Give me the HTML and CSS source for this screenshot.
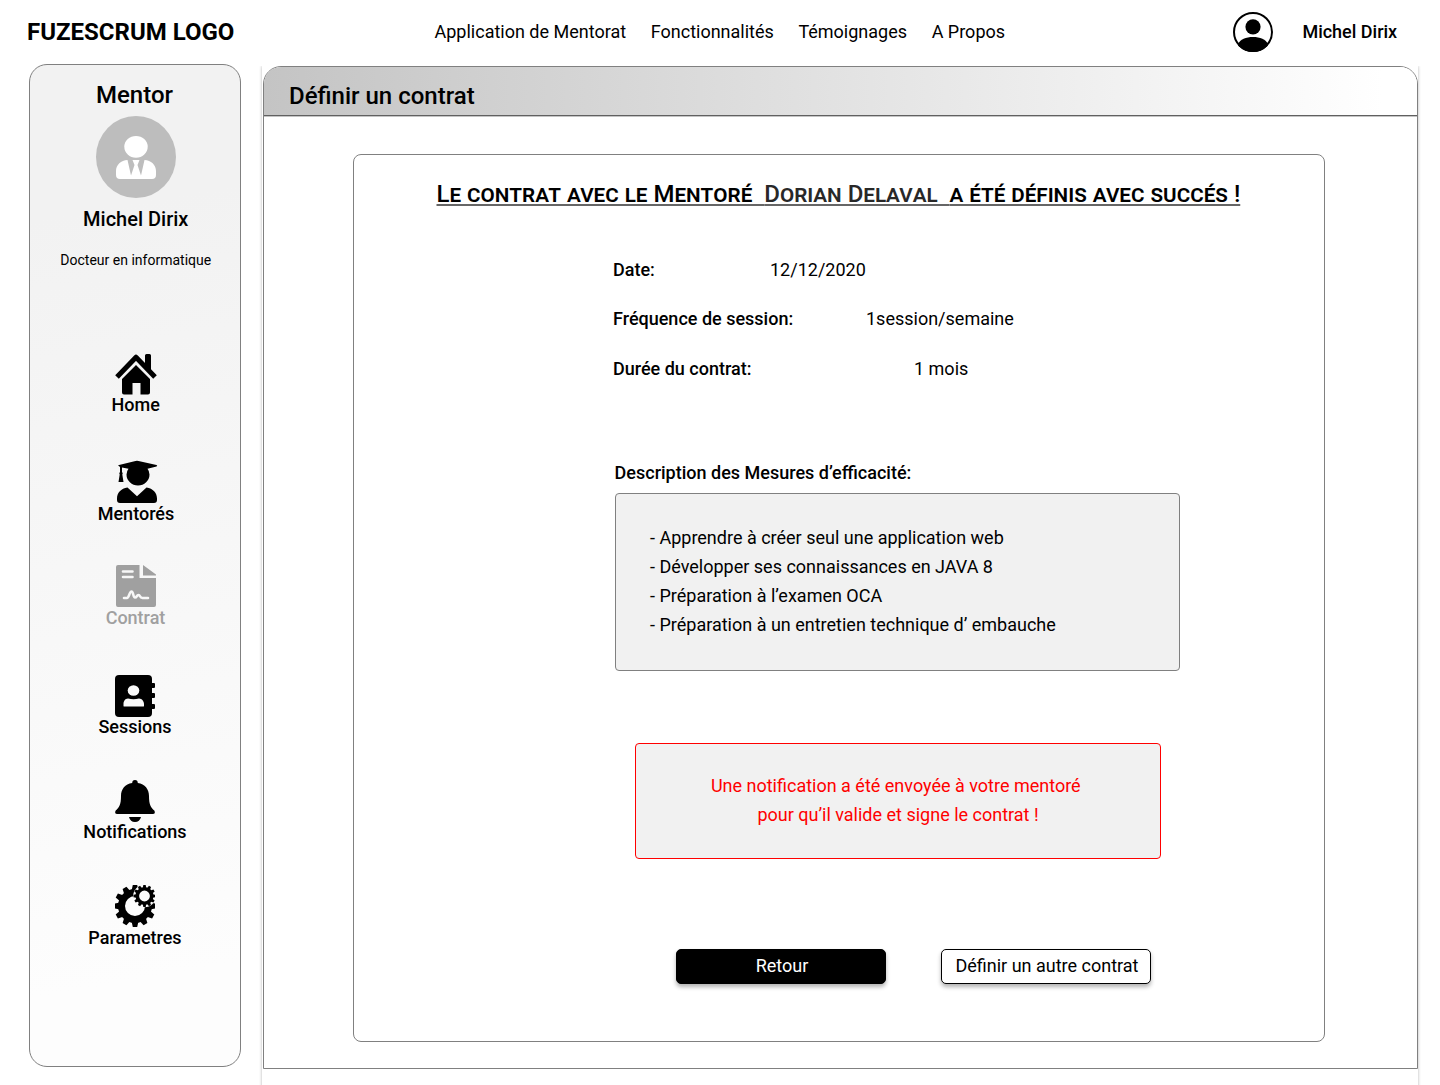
FILE: index.html
```html
<!DOCTYPE html>
<html lang="fr">
<head>
<meta charset="utf-8">
<title>Définir un contrat</title>
<link rel="stylesheet" href="styles.css">
</head>
<body>
<header class="topbar">
  <div class="logo">FUZESCRUM LOGO</div>
  <nav class="topnav">
    <a>Application de Mentorat</a><a>Fonctionnalités</a><a>Témoignages</a><a>A Propos</a>
  </nav>
  <svg class="user-icon" viewBox="0 0 40 40"><defs><clipPath id="disc"><circle cx="20" cy="20" r="20"/></clipPath></defs><circle cx="20" cy="20" r="19" fill="#fff" stroke="#000" stroke-width="2"/><circle cx="20" cy="14.8" r="7.6"/><path clip-path="url(#disc)" d="M5 32C7 27.500 13 25 20 25s13 2.500 15 7v9H5z"/></svg>
  <span class="user-name">Michel Dirix</span>
</header>
<div class="layout">
  <aside class="sidebar">
    <h2 class="role">Mentor</h2>
    <svg class="avatar" viewBox="0 0 80 82"><ellipse cx="40" cy="41" rx="40" ry="41" fill="#bdbdbd"/><ellipse cx="40" cy="30.800" rx="11.700" ry="10.900" fill="#fff"/><path fill="#fff" d="M31.500 44C25 44 20 49 20 55v4q0 4 4 4h32q4 0 4-4v-4c0-6-5-11-11.500-11L45 59.500 41.500 49l2-5h-7l2 5L35 59.500z"/></svg>
    <div class="mentor-name">Michel Dirix</div>
    <div class="mentor-title">Docteur en informatique</div>
    <nav class="menu">
      <a class="item home">
        <svg width="42" height="42" viewBox="0 0 42 42"><path d="M2 24 21 4.200 40 24" fill="none" stroke="#000" stroke-width="5" stroke-linejoin="round"/><path d="M30 2.500q0-1.500 1.500-1.500h3q1.500 0 1.500 1.500V18l-6-6zM21 12 35 26v13.500q0 2-2 2h-7.500V30h-8v11.500H9q-2 0-2-2V26z"/></svg>
        <span>Home</span></a>
      <a class="item mentees">
        <svg width="42" height="43" viewBox="0 0 42 43"><path d="M2 5.300 19.500 1q1.500-.3 3 0L40.500 5q1.500.6 0 1.400L31.500 8.700q2 2.500 2 5.800a11.500 11 0 0 1-23 0q0-3.300 2-5.800L6 7.500V12q1.300 1 .3 2.500L7.500 22h-5l1.200-7.500Q2.700 13 4 12V7z"/><path d="M11.500 27.500 21 36.200l9.500-8.700C37 28.500 41 33 41 38.500V40q0 3-3 3H4q-3 0-3-3v-1.500C1 33 5 28.500 11.500 27.500z"/></svg>
        <span>Mentorés</span></a>
      <a class="item contract">
        <svg width="40" height="42" viewBox="0 0 40 42"><path fill="#a0a0a0" d="M2 0h21.500v13H40v27q0 2-2 2H2q-2 0-2-2V2q0-2 2-2zM27 0 40 9.500V10.500H27z"/><path d="M7 6.500h9.500M7 12h9.500M8 33h3c2 0 2.500-6.500 4.500-6.500s1.500 6 3.500 6 1.500-2.500 3.500-2.500 1 3 4 3H32" fill="none" stroke="#f7f7f7" stroke-width="2.600" stroke-linecap="round"/></svg>
        <span>Contrat</span></a>
      <a class="item sessions">
        <svg width="40" height="42" viewBox="0 0 40 42"><rect width="37" height="42" rx="4"/><path d="M36 8h3q1 0 1 1v3q0 1-1 1h-3zM36 18h3q1 0 1 1v3q0 1-1 1h-3zM36 29h3q1 0 1 1v3q0 1-1 1h-3z"/><ellipse cx="18.500" cy="15.500" rx="5.800" ry="5.300" fill="#f9f9f9"/><path fill="#f9f9f9" d="M13 23.500q5.500 1.500 11 0c3 0 5 3 5 5.500v2q0 .5-1 .5H9.500q-1 0-1-.5v-2c0-2.500 1.500-5.500 4.500-5.500z"/></svg>
        <span>Sessions</span></a>
      <a class="item notifications">
        <svg width="40" height="42" viewBox="0 0 40 42"><path d="M20 0q2.800 0 2.800 3C30 4.200 34 9 34 16c0 9 2 11.500 5.300 14.500Q41 34 37.500 34h-35Q-1 34 .7 30.500C4 27.500 6 25 6 16 6 9 10 4.200 17.200 3q0-3 2.800-3zM14 37h12q-1.300 5-6 5t-6-5z"/></svg>
        <span>Notifications</span></a>
      <a class="item settings">
        <svg width="40" height="42" viewBox="0 0 40 42">
          <defs>
            <path id="tooth" d="M-3.500-15-2.200-21h4.400l1.300 6z"/>
            <path id="cog" d="M-1.700-8-1.200-11h2.400l.5 3z"/>
          </defs>
          <g transform="translate(20 21)">
            <circle r="13.500" fill="none" stroke="#000" stroke-width="7"/>
            <use href="#tooth"/><use href="#tooth" transform="rotate(30)"/><use href="#tooth" transform="rotate(60)"/><use href="#tooth" transform="rotate(90)"/><use href="#tooth" transform="rotate(120)"/><use href="#tooth" transform="rotate(150)"/><use href="#tooth" transform="rotate(180)"/><use href="#tooth" transform="rotate(210)"/><use href="#tooth" transform="rotate(240)"/><use href="#tooth" transform="rotate(270)"/><use href="#tooth" transform="rotate(300)"/><use href="#tooth" transform="rotate(330)"/>
          </g>
          <g transform="translate(29.500 11)">
            <circle r="11.300" fill="#fbfbfb"/>
            <circle r="7.200" fill="none" stroke="#000" stroke-width="3.600"/>
            <use href="#cog"/><use href="#cog" transform="rotate(30)"/><use href="#cog" transform="rotate(60)"/><use href="#cog" transform="rotate(90)"/><use href="#cog" transform="rotate(120)"/><use href="#cog" transform="rotate(150)"/><use href="#cog" transform="rotate(180)"/><use href="#cog" transform="rotate(210)"/><use href="#cog" transform="rotate(240)"/><use href="#cog" transform="rotate(270)"/><use href="#cog" transform="rotate(300)"/><use href="#cog" transform="rotate(330)"/>
          </g>
        </svg>
        <span>Parametres</span></a>
    </nav>
  </aside>
  <main class="page">
    <section class="panel">
      <h1 class="panel-title">Définir un contrat</h1>
      <div class="card">
        <h2 class="success"><span>Le contrat avec le Mentoré&nbsp; </span><span class="mentee">Dorian Delaval&nbsp; </span><span>a été définis avec succés !</span></h2>
        <dl class="facts">
          <div class="fact date"><dt>Date:</dt><dd>12/12/2020</dd></div>
          <div class="fact frequency"><dt>Fréquence de session:</dt><dd>1session/semaine</dd></div>
          <div class="fact duration"><dt>Durée du contrat:</dt><dd>1 mois</dd></div>
        </dl>
        <h3 class="measures-title">Description des Mesures d’efficacité:</h3>
        <div class="measures">
          <p>- Apprendre à créer seul une application web</p>
          <p>- Développer ses connaissances en JAVA 8</p>
          <p>- Préparation à l’examen OCA</p>
          <p>- Préparation à un entretien technique d’ embauche</p>
        </div>
        <div class="notice"><p>Une notification a été envoyée à votre mentoré&nbsp;</p><p>pour qu’il valide et signe le contrat !</p></div>
        <div class="actions">
          <button class="btn primary">Retour</button>
          <button class="btn">Définir un autre contrat</button>
        </div>
      </div>
    </section>
  </main>
</div>
</body>
</html>
```
FILE: styles.css
```css
* { box-sizing: border-box; margin: 0; padding: 0; }
body { width: 1440px; height: 1085px; overflow: hidden; background: #fff; color: #000; font: 400 18px/20px Roboto, sans-serif; }
svg { display: block; flex: none; }

.topbar { display: flex; align-items: center; height: 64px; padding-left: 27px; white-space: nowrap; }
.logo { width: 407.500px; font-size: 24px; font-weight: 700; }
.topnav { display: flex; gap: 24.600px; width: 798.500px; }
.user-icon { width: 40px; height: 40px; margin-right: 29.400px; }
.user-name { font-weight: 500; }

.layout { display: flex; align-items: flex-start; height: 1021px; padding-left: 29px; }
.sidebar { display: flex; flex-direction: column; align-items: center; width: 212px; height: 1003px; border: 1px solid #808080; border-radius: 18px; background: linear-gradient(170deg, #f2f2f2 15%, #fdfdfd 90%); white-space: nowrap; }
.role { margin: 16px 1px 0 0; font-size: 24px; font-weight: 500; line-height: 28px; }
.avatar { width: 80px; height: 82px; margin: 6.500px 0 11.500px 1.500px; }
.mentor-name { margin-left: 1.500px; font-size: 20px; font-weight: 500; }
.mentor-title { margin: 21px 0 0 1.500px; font-size: 14px; }
.menu { display: flex; flex-direction: column; align-items: center; margin-top: 83px; }
.item { display: flex; flex-direction: column; align-items: center; font-weight: 500; }
.home { margin-left: 1.500px; }
.home svg { margin-left: 1px; }
.mentees { margin: 45px 0 0 2px; }
.mentees span { margin-top: 1px; }
.mentees svg { margin-left: 2px; }
.contract { margin: 41px 0 0 1px; color: #a0a0a0; }
.contract span, .settings span { margin-top: 1px; }
.contract svg { margin-left: 1px; }
.sessions { margin-top: 47px; }
.notifications { margin-top: 43px; }
.settings { margin-top: 43px; }

.page { width: 1156px; height: 1040px; margin: 2px 0 0 21px; padding-left: 1px; box-shadow: 0 0 3px rgba(0, 0, 0, .3); clip-path: inset(0 -4px -4px -4px); }
.panel { width: 1155px; height: 1003px; border: 1px solid #808080; border-radius: 18px 18px 0 0; background: #fff; overflow: hidden; }
.panel-title { height: 49px; padding: 4.500px 0 0 25px; border-bottom: 1px solid #606060; background: linear-gradient(90deg, #c4c4c4, #fff 97%); box-shadow: 0 1px 0 #c4c4c4; font-size: 24px; font-weight: 500; line-height: 48px; }
.card { width: 972px; height: 888px; margin: 38px 0 0 89px; border: 1px solid #808080; border-radius: 8px; white-space: nowrap; }
.success { margin: 25px 0 0 82.500px; font-size: 24px; font-weight: 500; line-height: 28px; font-variant: small-caps; text-decoration: underline #666; text-decoration-thickness: 2px; text-underline-offset: 2px; text-decoration-skip-ink: none; white-space: pre; }
.mentee { color: #282828; }
.facts { display: grid; gap: 29px; margin: 52px 0 0 259px; }
.fact { display: grid; grid-template-columns: 253px 1fr; height: 20.400px; }
.date { grid-template-columns: 157px 1fr; }
.duration { grid-template-columns: 301px 1fr; }
dt, .measures-title { font-size: 18px; font-weight: 500; }
.measures-title { margin: 83.800px 0 0 260.600px; line-height: 20px; }
.measures { width: 565px; height: 178px; margin: 10px 0 0 261px; padding: 29px 34px; border: 1px solid #808080; border-radius: 4px; background: #f1f1f1; line-height: 29px; }
.notice { width: 526px; height: 116px; margin: 72px 0 0 281px; padding-top: 27px; border: 1px solid #f00; border-radius: 4px; background: #f1f1f1; color: #f00; line-height: 29px; text-align: center; }
.actions { display: flex; gap: 55px; margin: 90px 0 0 322px; }
.btn { width: 210px; height: 35px; padding-left: 2px; border: 1px solid #000; border-radius: 5px; background: #fff; box-shadow: 0 3px 4px rgba(0, 0, 0, .3); color: #000; font: 400 18px/20px Roboto, sans-serif; }
.primary { background: #000; color: #fff; }
```
